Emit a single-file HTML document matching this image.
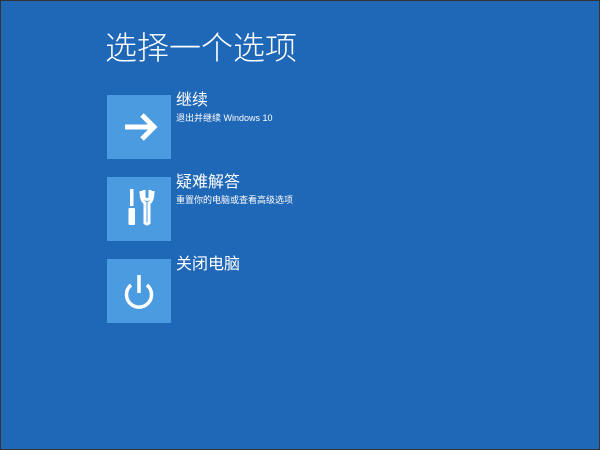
<!DOCTYPE html>
<html><head><meta charset="utf-8"><style>
html,body{margin:0;padding:0}
body{width:600px;height:450px;background:#1f67b7;position:relative;overflow:hidden;font-family:"Liberation Sans","Noto Sans CJK SC",sans-serif;color:#fff;box-sizing:border-box;border:1px solid #333}
.t{position:absolute;left:106px;width:64px;height:64px;background:#4b9be0}
.t svg{position:absolute;left:0;top:0}
.h{position:absolute;left:175px;font-size:16px;line-height:18px}
.s{position:absolute;left:175px;font-size:9px;line-height:10px}
</style></head><body>
<div style="position:absolute;left:104px;top:28px;font-size:32px;line-height:38px;font-weight:300">选择一个选项</div>
<div class="t" style="top:94px"><svg width="64" height="64"><path d="M18 32H47M35 20L47 32L35 44" stroke="#fff" stroke-width="5" fill="none"/></svg></div>
<div class="h" style="top:91px">继续</div>
<div class="s" style="top:112px">退出并继续 Windows 10</div>
<div class="t" style="top:176px"><svg width="64" height="64"><rect x="23" y="12" width="3.5" height="17" fill="#fff"/><rect x="21.5" y="31" width="6.5" height="17" rx="1" fill="#fff"/><path d="M37 13V21Q40 24 43 21V13M34 14Q34 24 38 26V46Q40 48 42 46V26Q46 24 46 14" stroke="#fff" stroke-width="3" fill="none"/></svg></div>
<div class="h" style="top:173px">疑难解答</div>
<div class="s" style="top:194px">重置你的电脑或查看高级选项</div>
<div class="t" style="top:258px"><svg width="64" height="64"><path d="M24 26A12.5 12.5 0 1 0 40 26" stroke="#fff" stroke-width="3.5" fill="none"/><path d="M32 16V34" stroke="#fff" stroke-width="3.5"/></svg></div>
<div class="h" style="top:255px">关闭电脑</div>
</body></html>
